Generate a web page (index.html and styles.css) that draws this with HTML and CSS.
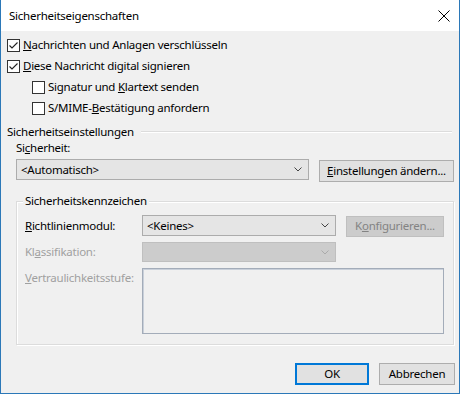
FILE: index.html
```html
<!DOCTYPE html>
<html lang="de">
<head>
    <meta charset="UTF-8">
    <title>Sicherheitseigenschaften</title>
    <link rel="stylesheet" href="styles.css">
</head>
<body>
    <div class="window">
        <div class="titlebar">
            <span class="title">Sicherheitseigenschaften</span>
            <svg class="close" width="12" height="12" viewBox="0 0 12 12">
                <path d="M0.5 0.5 L11.5 11.5 M11.5 0.5 L0.5 11.5" stroke="#000" stroke-width="1" fill="none"/>
            </svg>
        </div>

        <div class="content">
            <div class="check">
                <span class="box"><svg width="11" height="11" viewBox="0 0 11 11"><polyline points="1.5,5.5 4,8 9.5,2.5" fill="none" stroke="#222" stroke-width="1.1"/></svg></span>
                <span><u>N</u>achrichten und Anlagen verschlüsseln</span>
            </div>
            <div class="check">
                <span class="box"><svg width="11" height="11" viewBox="0 0 11 11"><polyline points="1.5,5.5 4,8 9.5,2.5" fill="none" stroke="#222" stroke-width="1.1"/></svg></span>
                <span><u>D</u>iese Nachricht digital signieren</span>
            </div>
            <div class="check indent">
                <span class="box"></span>
                <span>Signatur und <u>K</u>lartext senden</span>
            </div>
            <div class="check indent">
                <span class="box"></span>
                <span>S/MIME-<u>B</u>estätigung anfordern</span>
            </div>

            <div class="section-head">
                <span>Sicherheitseinstellungen</span>
                <span class="rule"></span>
            </div>
            <div class="field-label">Si<u>c</u>herheit:</div>
            <div class="security-row">
                <div class="combo security-combo">
                    <span>&lt;Automatisch&gt;</span>
                    <svg class="chevron" width="8" height="5" viewBox="0 0 8 5"><polyline points="0.5,0.5 4,4 7.5,0.5" fill="none" stroke="#444" stroke-width="1"/></svg>
                </div>
                <button class="btn settings-btn"><u>E</u>instellungen ändern...</button>
            </div>

            <fieldset class="group">
                <legend>Sicherheitskennzeichen</legend>
                <div class="label-grid">
                    <span class="lbl"><u>R</u>ichtlinienmodul:</span>
                    <div class="combo">
                        <span>&lt;Keines&gt;</span>
                        <svg class="chevron" width="8" height="5" viewBox="0 0 8 5"><polyline points="0.5,0.5 4,4 7.5,0.5" fill="none" stroke="#444" stroke-width="1"/></svg>
                    </div>
                    <button class="btn disabled">K<u>o</u>nfigurieren...</button>

                    <span class="lbl dim">Kl<u>a</u>ssifikation:</span>
                    <div class="combo combo-disabled">
                        <span></span>
                        <svg class="chevron" width="8" height="5" viewBox="0 0 8 5"><polyline points="0.5,0.5 4,4 7.5,0.5" fill="none" stroke="#aaa" stroke-width="1"/></svg>
                    </div>
                    <span></span>

                    <span class="lbl dim top"><u>V</u>ertraulichkeitsstufe:</span>
                    <div class="textbox"></div>
                </div>
            </fieldset>

            <div class="footer">
                <button class="btn default">OK</button>
                <button class="btn cancel">Abbrechen</button>
            </div>
        </div>
    </div>
</body>
</html>
```

FILE: styles.css
```css
* {
    margin: 0;
    padding: 0;
    box-sizing: border-box;
}

body {
    width: 460px;
    height: 394px;
    font-family: 'Noto Sans', 'Open Sans', sans-serif;
    font-size: 11.5px;
    letter-spacing: -0.25px;
    line-height: 14px;
    color: #000;
    background: #f0f0f0;
}

.window {
    width: 460px;
    height: 394px;
    border: 1px solid #2b78b8;
    border-top: none;
    background: #f0f0f0;
}

.titlebar {
    height: 31px;
    background: #fff;
    display: flex;
    align-items: center;
    justify-content: space-between;
    padding: 0 9px 0 8px;
}

.close {
    display: block;
    margin-top: 1px;
}

.content {
    padding: 7px 0 0 6px;
}

/* checkboxes */
.check {
    display: flex;
    align-items: center;
    gap: 3px;
    height: 14px;
    margin-bottom: 7px;
}

.check.indent {
    margin-left: 25px;
}

.box {
    width: 13px;
    height: 13px;
    border: 1px solid #333;
    background: #fff;
    display: flex;
}

u {
    text-decoration: underline;
    text-underline-offset: 1px;
}

/* section heading with rule */
.section-head {
    display: flex;
    align-items: center;
    margin-top: 10px;
    height: 14px;
    padding-right: 7px;
}

.section-head .rule {
    flex: 1;
    margin-left: 7px;
    height: 2px;
    border-top: 1px solid #dcdcdc;
    border-bottom: 1px solid #fff;
}

.field-label {
    margin: 2px 0 0 9px;
}

.security-row {
    display: flex;
    gap: 10px;
    margin: 4px 0 0 9px;
}

/* combo boxes */
.combo {
    height: 21px;
    border: 1px solid #acacac;
    background: #e5e5e5;
    display: flex;
    align-items: center;
    justify-content: space-between;
    padding: 0 5px 0 4px;
}

.security-combo {
    width: 293px;
}

.combo-disabled {
    height: 20px;
    border-color: #bfbfbf;
    background: #cccccc;
}

.chevron {
    display: block;
    margin-right: 1px;
}

/* buttons */
.btn {
    font: inherit;
    letter-spacing: inherit;
    color: #000;
    height: 22px;
    border: 1px solid #adadad;
    background: #e1e1e1;
}

.settings-btn {
    width: 135px;
    margin-top: 1px;
}

.btn.disabled {
    justify-self: end;
    color: #838383;
    border-color: #bfbfbf;
    background: #cccccc;
    width: 98px;
    height: 21px;
    margin-top: 1px;
}

.btn.default {
    border: 2px solid #0078d7;
}

/* group box */
.group {
    min-inline-size: 0;
    margin: 12px 5px 0 9px;
    padding: 7px 8px 10px 8px;
    border: 1px solid #dcdcdc;
    box-shadow: 1px 1px 0 #fff, inset 1px 1px 0 #fff;
}

.group legend {
    padding: 0 2px;
    margin-left: -2px;
    line-height: 14px;
    background: #f0f0f0;
}

.label-grid {
    display: grid;
    grid-template-columns: 117px 194px 108px;
    grid-template-rows: 21px 20px 66px;
    row-gap: 6px;
    align-items: center;
}

.label-grid .lbl.top {
    align-self: start;
    margin-top: 3px;
}

.lbl.dim {
    color: #a0a0a0;
}

.textbox {
    grid-column: 2 / 4;
    height: 66px;
    border: 1px solid #a3acb9;
    box-shadow: inset 1px 1px 0 #c9d0da;
    background: #f0f0f0;
}

/* dialog buttons */
.footer {
    display: flex;
    justify-content: flex-end;
    gap: 10px;
    margin-top: 18px;
    padding-right: 4px;
}

.footer .btn {
    width: 74px;
}

.footer .btn.cancel {
    width: 76px;
}
```
